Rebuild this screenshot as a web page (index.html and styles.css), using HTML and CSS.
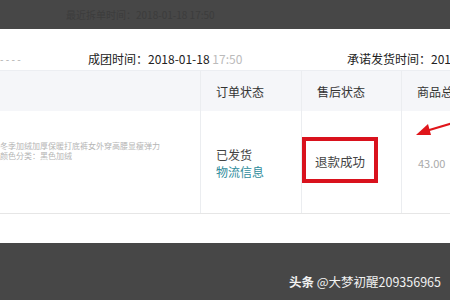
FILE: index.html
```html
<!DOCTYPE html>
<html lang="zh-CN">
<head>
    <meta charset="UTF-8">
    <title>订单详情</title>
    <link rel="stylesheet" href="styles.css">
</head>
<body>
    <div class="topbar">
        <span class="topbar-text">最近拆单时间：2018-01-18 17:50</span>
    </div>

    <div class="panel">
        <div class="info-row">
            <span class="dashes">- - - -</span>
            <span class="info-group">成团时间：2018-01-18 <span class="blur">17:50</span></span>
            <span class="info-promise">承诺发货时间：2018-01-20</span>
        </div>

        <div class="order-table">
            <div class="cell head"></div>
            <div class="cell head sep">订单状态</div>
            <div class="cell head sep">售后状态</div>
            <div class="cell head sep">商品总价</div>

            <div class="cell body product">
                <p>冬季加绒加厚保暖打底裤女外穿高腰显瘦弹力</p>
                <p>颜色分类：黑色加绒</p>
            </div>
            <div class="cell body sep status">
                <span>已发货</span>
                <a class="link">物流信息</a>
            </div>
            <div class="cell body sep after">
                <div class="highlight">退款成功</div>
            </div>
            <div class="cell body sep price">43.00</div>
        </div>

        <svg class="arrow" width="40" height="20" viewBox="0 0 40 20">
            <line x1="40" y1="3" x2="10" y2="12" stroke="#e0161b" stroke-width="2.2"/>
            <polygon points="0,16 12,5 15,16" fill="#e0161b"/>
        </svg>
    </div>

    <div class="footer">
        <span class="watermark"><b>头条</b> @大梦初醒209356965</span>
    </div>
</body>
</html>
```

FILE: styles.css
```css
body {
    margin: 0;
    width: 450px;
    height: 300px;
    overflow: hidden;
    background-color: #474747;
    font-family: "Noto Sans CJK SC", "Liberation Sans", sans-serif;
    color: #333;
}

.topbar {
    height: 29px;
    display: flex;
    align-items: center;
    padding-left: 66px;
}

.topbar-text {
    font-size: 10px;
    color: #3c3c3c;
}

.panel {
    position: relative;
    height: 214px;
    background-color: #fff;
    overflow: hidden;
}

.info-row {
    height: 41px;
    display: flex;
    align-items: center;
    padding-top: 18px;
    box-sizing: border-box;
    font-size: 12px;
    white-space: nowrap;
}

.dashes {
    flex-shrink: 0;
    width: 88px;
    color: #aaa;
    font-size: 10px;
}

.info-group {
    flex-shrink: 0;
    width: 259px;
    color: #222;
}

.blur {
    color: #bbb;
}

.info-promise {
    flex-shrink: 0;
    color: #222;
}

.order-table {
    display: grid;
    grid-template-columns: 200px 101px 100px 1fr;
    grid-template-rows: 40px 102px;
    border-top: 1px solid #eceef2;
    border-bottom: 1px solid #e6e6e6;
    width: 470px;
}

.cell {
    box-sizing: border-box;
    font-size: 12px;
}

.sep {
    border-left: 1px solid #ebedf0;
}

.head {
    background-color: #f5f6f9;
    display: flex;
    align-items: center;
    padding-left: 15px;
    padding-top: 1px;
    color: #333;
}

.body {
    padding-left: 15px;
}

.product {
    padding-left: 0;
    padding-top: 30px;
    overflow: hidden;
}

.product p {
    margin: 0;
    font-size: 8px;
    line-height: 10px;
    color: #b5b5b5;
    white-space: nowrap;
}

.status {
    display: flex;
    flex-direction: column;
    padding-top: 35px;
    line-height: 17px;
    color: #444;
}

.link {
    color: #2f8c9c;
}

.after {
    padding-left: 0;
    padding-top: 26px;
}

.highlight {
    width: 76px;
    height: 46px;
    box-sizing: border-box;
    border: 4px solid #d9121d;
    display: flex;
    align-items: center;
    justify-content: center;
    color: #444;
    font-size: 12.5px;
    padding-top: 3px;
}

.price {
    padding-top: 44px;
    padding-left: 16px;
    color: #aaa;
    font-size: 11px;
}

.arrow {
    position: absolute;
    left: 416px;
    top: 90px;
}

.footer {
    height: 57px;
    display: flex;
    justify-content: flex-end;
    align-items: flex-end;
    padding-right: 9px;
    padding-bottom: 9px;
    box-sizing: border-box;
}

.watermark {
    color: #f2f2f2;
    font-size: 12.5px;
    white-space: nowrap;
}

.watermark b {
    font-weight: bold;
}
```
